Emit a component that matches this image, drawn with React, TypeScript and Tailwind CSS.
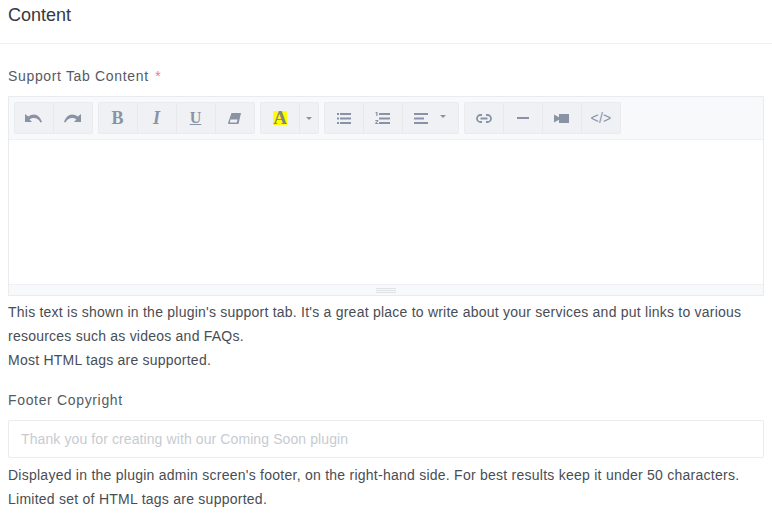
import React from "react";

const C = "#8a93a6";

function Btn({ w = "w-[39px]", last, children }: { w?: string; last?: boolean; children: React.ReactNode }) {
  return (
    <div className={`${last ? "" : "border-r border-[#e7e9ed]"} ${w} h-full flex items-center justify-center`}>
      {children}
    </div>
  );
}

function Group({ children }: { children: React.ReactNode }) {
  return (
    <div className="flex h-[32px] rounded-[2px] border border-[#e9ebee] bg-[#f0f1f4]">{children}</div>
  );
}

const Undo = () => (
  <svg className="mr-[2px]" width="18" height="10" viewBox="0 0 18 10" fill={C}>
    <path d="M1 1v8h7L5.600 6.400C7 5.500 8.400 5 10 5c2.800 0 5 1.500 6.500 4.500L18 9C16.500 4.500 13.500 1.500 10 1.500 8 1.500 5.800 2.200 4.200 3.600Z" />
  </svg>
);
const Redo = () => (
  <svg width="18" height="10" viewBox="0 0 18 10" fill={C}>
    <path d="M17 1v8h-7l2.400-2.600C11 5.500 9.600 5 8 5 5.200 5 3 6.500 1.500 9.500L0 9C1.500 4.500 4.500 1.500 8 1.500c2 0 4.200.7 5.800 2.100Z" />
  </svg>
);
const Eraser = () => (
  <svg className="mr-[1px]" width="13" height="11" viewBox="0 0 13 11" fill={C}>
    <path fillRule="evenodd" d="M3.500 0H13l-2.500 11H0.500L0 10Zm-1 6.500L1.800 9.500h7l.7-3Z" />
  </svg>
);
const Bullets = () => (
  <svg className="mr-[1px]" width="14" height="11" viewBox="0 0 14 11" fill={C}>
    <rect x="0" y="0" width="2" height="2" />
    <rect x="0" y="4.500" width="2" height="2" />
    <rect x="0" y="9" width="2" height="2" />
    <rect x="3" y="0" width="11" height="2" />
    <rect x="3" y="4.500" width="11" height="2" />
    <rect x="3" y="9" width="11" height="2" />
  </svg>
);
const Numbered = () => (
  <svg className="mr-[2px]" width="15" height="13" viewBox="0 0 15 13" fill={C}>
    <path d="M1 0h1.500v4H1.300V1.200H.5V.6ZM0.300 8h3v1l-1.700 2h1.800v1H0.200v-1l1.800-2H.3Z" />
    <rect x="4" y="1" width="11" height="2" />
    <rect x="4" y="5.500" width="11" height="2" />
    <rect x="4" y="10" width="11" height="2" />
  </svg>
);
const AlignLeft = () => (
  <svg width="14" height="11" viewBox="0 0 14 11" fill={C}>
    <rect x="0" y="0" width="14" height="2" />
    <rect x="0" y="4.500" width="10" height="2" />
    <rect x="0" y="9" width="14" height="2" />
  </svg>
);
const Link = () => (
  <svg className="mr-[1px]" width="16" height="9" viewBox="0 0 16 9" fill="none" stroke={C} strokeWidth="1.800">
    <path d="M6 1H4.500a3.500 3.500 0 0 0 0 7H6M10 1h1.500a3.500 3.500 0 0 1 0 7H10M4.500 4.500h7" />
  </svg>
);
const Video = () => (
  <svg className="mr-[1px]" width="15" height="9" viewBox="0 0 15 9" fill={C}>
    <path d="M5 0h10v9H5V5.800L0 8.500V.5L5 3.200Z" />
  </svg>
);
const Caret = () => (
  <svg width="6" height="3" viewBox="0 0 6 3" fill={C}>
    <path d="M0 0h6L3 3Z" />
  </svg>
);

export default function App() {
  return (
    <div className="w-[772px] h-[514px] overflow-hidden bg-white text-[14px] text-[#484d55] font-['Liberation_Sans',Arial,sans-serif]">
      <div className="h-[44px] px-2 pt-[5px] border-b border-[#f0f0f1] text-[18px] leading-[21px] text-[#36393f]">
        Content
      </div>
      <div className="px-2 pt-[23px]">
        <div className="text-[14px] leading-[18px] tracking-[0.66px] text-[#555a64] mb-[11px]">
          Support Tab Content <span className="text-[#f4747a] ml-[2px]">*</span>
        </div>
        <div className="w-[756px] border border-[#e9ebee] bg-white">
          <div className="h-[43px] bg-[#f8f9fb] border-b border-[#f0f1f4] pl-[5px] pt-[5px] flex gap-[5px]">
            <Group>
              <Btn><Undo /></Btn>
              <Btn w="w-[38px]" last><Redo /></Btn>
            </Group>
            <Group>
              <Btn><span className="mr-[1px] font-['Liberation_Serif',serif] font-bold text-[18px] leading-none text-[#8a93a6]">B</span></Btn>
              <Btn><span className="mr-[1px] font-['Liberation_Serif',serif] italic font-bold text-[18px] leading-none text-[#8a93a6]">I</span></Btn>
              <Btn><span className="mr-[1px] font-['Liberation_Serif',serif] font-bold text-[16px] leading-[14px] underline text-[#8a93a6]">U</span></Btn>
              <Btn w="w-[38px]" last><Eraser /></Btn>
            </Group>
            <Group>
              <Btn>
                <span className="w-[14px] h-[14px] bg-[#ffff00] flex items-center justify-center font-['Liberation_Serif',serif] font-bold text-[19px] leading-[14px] text-[#858585]">A</span>
              </Btn>
              <Btn w="w-[18px]" last><div className="mr-[1px] flex"><Caret /></div></Btn>
            </Group>
            <Group>
              <Btn><Bullets /></Btn>
              <Btn><Numbered /></Btn>
              <Btn w="w-[55px]" last>
                <div className="flex items-start gap-[12px] mr-[1px]">
                  <AlignLeft />
                  <div className="pt-[2px] flex"><Caret /></div>
                </div>
              </Btn>
            </Group>
            <Group>
              <Btn><Link /></Btn>
              <Btn><span className="mr-[1px] block w-[12px] h-[2px] bg-[#8a93a6]" /></Btn>
              <Btn><Video /></Btn>
              <Btn w="w-[38px]" last><span className="text-[14px] tracking-[0.3px] text-[#8a93a6]">&lt;/&gt;</span></Btn>
            </Group>
          </div>
          <div className="h-[144px] bg-white" />
          <div className="h-[11px] bg-[#f8f9fb] border-t border-[#f0f1f4] flex flex-col items-center justify-center gap-[1px]">
            <span className="block w-[20px] h-px bg-[#dfe1e5]" />
            <span className="block w-[20px] h-px bg-[#dfe1e5]" />
            <span className="block w-[20px] h-px bg-[#dfe1e5]" />
          </div>
        </div>
        <p className="mt-[4px] text-[14px] tracking-[0.23px] leading-[24px] w-[756px]">
          This text is shown in the plugin's support tab. It's a great place to write about your services and put links to various resources such as videos and FAQs.
          <br />
          Most HTML tags are supported.
        </p>
        <div className="mt-[19px] text-[14px] leading-[18px] tracking-[0.66px] text-[#555a64] mb-[11px]">Footer Copyright</div>
        <div className="w-[756px] h-[38px] rounded-[2px] border border-[#e9ebee] px-[12px] flex items-center text-[14px] tracking-[0.1px] text-[#c7cbd1]">
          Thank you for creating with our Coming Soon plugin
        </div>
        <p className="mt-[5px] text-[14px] tracking-[0.25px] leading-[24px] w-[756px]">
          Displayed in the plugin admin screen's footer, on the right-hand side. For best results keep it under 50 characters.
          <br />
          Limited set of HTML tags are supported.
        </p>
      </div>
    </div>
  );
}
